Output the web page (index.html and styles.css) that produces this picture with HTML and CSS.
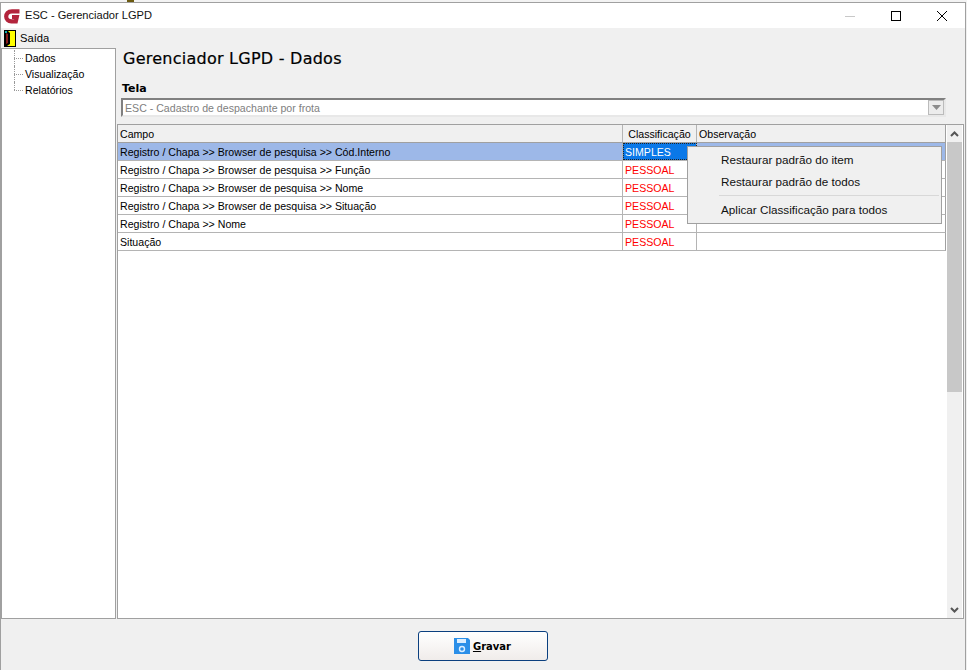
FILE: index.html
```html
<!DOCTYPE html>
<html lang="pt">
<head>
<meta charset="utf-8">
<title>ESC - Gerenciador LGPD</title>
<link rel="stylesheet" href="styles.css">
</head>
<body>
<div class="desktop-strip"><span class="strip-mark"></span></div>
<div class="window">
  <header class="titlebar">
    <svg class="app-logo" width="16" height="16" viewBox="0 0 16 16"><path d="M15.5 3.4H8C3.8 3.4 2.2 6 2.2 8.6c0 2.8 2 4.8 5.2 4.8h4.4l1-4.4H8" fill="none" stroke="#b3243c" stroke-width="4.2"/></svg>
    <span class="app-title">ESC - Gerenciador LGPD</span>
    <div class="win-buttons">
      <span class="win-btn"><svg width="12" height="12" viewBox="0 0 12 12"><path d="M1 6.5h10" stroke="#c8c8c8"/></svg></span>
      <span class="win-btn"><svg width="12" height="12" viewBox="0 0 12 12"><rect x="1.5" y="1.5" width="9" height="9" fill="none" stroke="#000"/></svg></span>
      <span class="win-btn"><svg width="12" height="12" viewBox="0 0 12 12"><path d="M1 1l10 10M11 1L1 11" stroke="#000"/></svg></span>
    </div>
  </header>
  <nav class="menubar">
    <svg class="door" width="12" height="17" viewBox="0 0 12 17"><rect width="12" height="17" fill="#000"/><rect x="1" y="1" width="10" height="15" fill="#ff0"/><path d="M1 1h3l2 2v11l-3 2H1z" fill="#000"/><path d="M2 3l2 1v9l-2 1z" fill="#8a1a1a"/><rect x="1" y="1" width="2" height="2" fill="#1aa"/></svg>
    <span class="menu-label">Saída</span>
  </nav>
  <main class="content">
    <aside class="tree">
      <div class="tree-item">Dados</div>
      <div class="tree-item">Visualização</div>
      <div class="tree-item last">Relatórios</div>
    </aside>
    <section class="panel">
      <h1 class="heading">Gerenciador LGPD - Dados</h1>
      <label class="field-label">Tela</label>
      <div class="combo">
        <span class="combo-text">ESC - Cadastro de despachante por frota</span>
        <span class="combo-btn"><svg width="9" height="5" viewBox="0 0 9 5"><path d="M0 0h9L4.5 5z" fill="#8c8c8c"/></svg></span>
      </div>
      <div class="grid-wrap">
        <div class="grid">
          <div class="row head"><div class="c1">Campo</div><div class="c2 center">Classificação</div><div class="c3">Observação</div></div>
          <div class="row selected"><div class="c1">Registro / Chapa &gt;&gt; Browser de pesquisa &gt;&gt; Cód.Interno</div><div class="c2 focus">SIMPLES</div><div class="c3"></div></div>
          <div class="row"><div class="c1">Registro / Chapa &gt;&gt; Browser de pesquisa &gt;&gt; Função</div><div class="c2 red">PESSOAL</div><div class="c3"></div></div>
          <div class="row"><div class="c1">Registro / Chapa &gt;&gt; Browser de pesquisa &gt;&gt; Nome</div><div class="c2 red">PESSOAL</div><div class="c3"></div></div>
          <div class="row"><div class="c1">Registro / Chapa &gt;&gt; Browser de pesquisa &gt;&gt; Situação</div><div class="c2 red">PESSOAL</div><div class="c3"></div></div>
          <div class="row"><div class="c1">Registro / Chapa &gt;&gt; Nome</div><div class="c2 red">PESSOAL</div><div class="c3"></div></div>
          <div class="row"><div class="c1">Situação</div><div class="c2 red">PESSOAL</div><div class="c3"></div></div>
        </div>
        <div class="scrollbar">
          <span class="sb-arrow"><svg width="9" height="6" viewBox="0 0 9 6"><path d="M1 5l3.5-3.5L8 5" fill="none" stroke="#555" stroke-width="2"/></svg></span>
          <span class="sb-thumb"></span>
          <span class="sb-space"></span>
          <span class="sb-arrow"><svg width="9" height="6" viewBox="0 0 9 6"><path d="M1 1l3.5 3.5L8 1" fill="none" stroke="#555" stroke-width="2"/></svg></span>
        </div>
        <div class="context-menu">
          <div class="cm-item">Restaurar padrão do item</div>
          <div class="cm-item">Restaurar padrão de todos</div>
          <div class="cm-sep"></div>
          <div class="cm-item">Aplicar Classificação para todos</div>
        </div>
      </div>
    </section>
  </main>
  <footer class="footer">
    <button class="save-btn" type="button">
      <svg width="16" height="16" viewBox="0 0 16 16"><path d="M0 0h14l2 2v14H0z" fill="#2b8fe8"/><rect x="3" y="1" width="9" height="4" fill="#dbeeff"/><circle cx="8" cy="11" r="2.5" fill="none" stroke="#dbeeff" stroke-width="1.4"/></svg>
      <span class="save-label"><u>G</u>ravar</span>
    </button>
  </footer>
</div>
</body>
</html>
```

FILE: styles.css
```css
* { box-sizing: border-box; }
html, body { margin: 0; padding: 0; }
body { width: 967px; height: 670px; overflow: hidden; background: #f0f0f0; font-family: "Liberation Sans", sans-serif; font-size: 10.6px; color: #000; }
.desktop-strip { height: 2px; background: #f3f3f3; display: flex; padding-left: 127px; }
.strip-mark { width: 7px; height: 2px; background: #6b5a10; }
.window { width: 966px; height: 668px; border: 1px solid #a0a0a0; border-bottom: 0; display: flex; flex-direction: column; background: #f0f0f0; }
.titlebar { height: 25px; flex: none; background: #fff; display: flex; align-items: center; padding-left: 3px; }
.app-logo { margin-right: 5px; }
.app-title { font-size: 11.1px; color: #111; padding-bottom: 2px; }
.win-buttons { margin-left: auto; display: flex; }
.win-btn { width: 46px; height: 25px; display: flex; align-items: center; justify-content: center; }
.menubar { height: 20px; flex: none; display: flex; align-items: center; padding-left: 3px; }
.menu-label { margin-left: 4px; font-size: 11.2px; }
.content { height: 571px; flex: none; display: flex; }
.tree { width: 115px; background: #fff; border: 1px solid #a0a0a0; padding: 1px 0 0 23px; }
.tree-item { height: 16px; line-height: 16px; position: relative; }
.tree-item::before { content: ""; position: absolute; left: -11px; top: 8px; width: 9px; border-top: 1px dotted #999; }
.tree-item::after { content: ""; position: absolute; left: -11px; top: 0; height: 16px; border-left: 1px dotted #999; }
.tree-item.last::after { height: 8px; }
.panel { flex: 1; min-width: 0; padding-left: 1px; display: flex; flex-direction: column; }
.heading { margin: 0 0 0 6px; height: 33px; padding-top: 1px; line-height: 20px; font-family: "DejaVu Sans", sans-serif; font-size: 16px; font-weight: 400; letter-spacing: 0.25px; color: #000; -webkit-text-stroke: 0.2px #000; }
.field-label { margin-left: 5px; height: 14px; line-height: 16px; font-family: "DejaVu Sans", sans-serif; font-weight: 700; font-size: 11px; }
.combo { margin: 3px 0 0 4px; width: 825px; height: 19px; background: #fff; border: 2px solid #808080; border-right-color: #e8e8e8; border-bottom-color: #e8e8e8; display: flex; align-items: center; justify-content: space-between; }
.combo-text { color: #808080; padding-left: 2px; }
.combo-btn { width: 16px; height: 15px; background: #ececec; border: 1px solid #bbb; display: flex; align-items: center; justify-content: center; }
.grid-wrap { position: relative; margin-top: 7px; margin-right: 1px; flex: 1; border: 1px solid #a0a0a0; background: #fff; display: flex; }
.grid { flex: 1; min-width: 0; }
.row { height: 18px; display: grid; grid-template-columns: 505px 74px 1fr; border-bottom: 1px solid #b4b4b4; border-right: 1px solid #a0a0a0; line-height: 19px; }
.row > div { padding-left: 2px; border-right: 1px solid #b4b4b4; white-space: nowrap; overflow: hidden; }
.row > div:last-child { border-right: 0; }
.row.head { background: #f0f0f0; border-bottom-color: #a0a0a0; }
.row.selected { background: #9db8e8; }
.c2.center { text-align: center; padding-left: 0 !important; }
.c2.red { color: #f00; }
.c2.focus { background: #0a78e8; color: #fff; outline: 1px dotted #222; outline-offset: -1px; }
.scrollbar { width: 15px; margin: 0 1px; flex: none; background: #f0f0f0; display: flex; flex-direction: column; }
.sb-arrow { height: 17px; flex: none; display: flex; align-items: center; justify-content: center; }
.sb-thumb { height: 250px; flex: none; background: #c8c8c8; }
.sb-space { flex: 1; }
.context-menu { position: absolute; left: 569px; top: 21px; width: 255px; height: 78px; background: #f0f0f0; border: 1px solid #a0a0a0; padding: 2px 0 0; }
.cm-item { height: 22px; line-height: 22px; padding-left: 33px; font-size: 11.7px; color: #111; }
.cm-sep { height: 1px; margin: 2px 2px 3px 31px; background: #d8d8d8; }
.footer { flex: 1; display: flex; justify-content: center; padding: 12px 1px 0 0; }
.save-btn { width: 130px; height: 30px; background: linear-gradient(#fff, #f0ecea); border: 1px solid #0a3f7f; border-radius: 3px; display: flex; align-items: center; justify-content: center; gap: 3px; padding: 0; font-family: "DejaVu Sans", sans-serif; font-size: 10px; font-weight: 700; color: #000; }
```
